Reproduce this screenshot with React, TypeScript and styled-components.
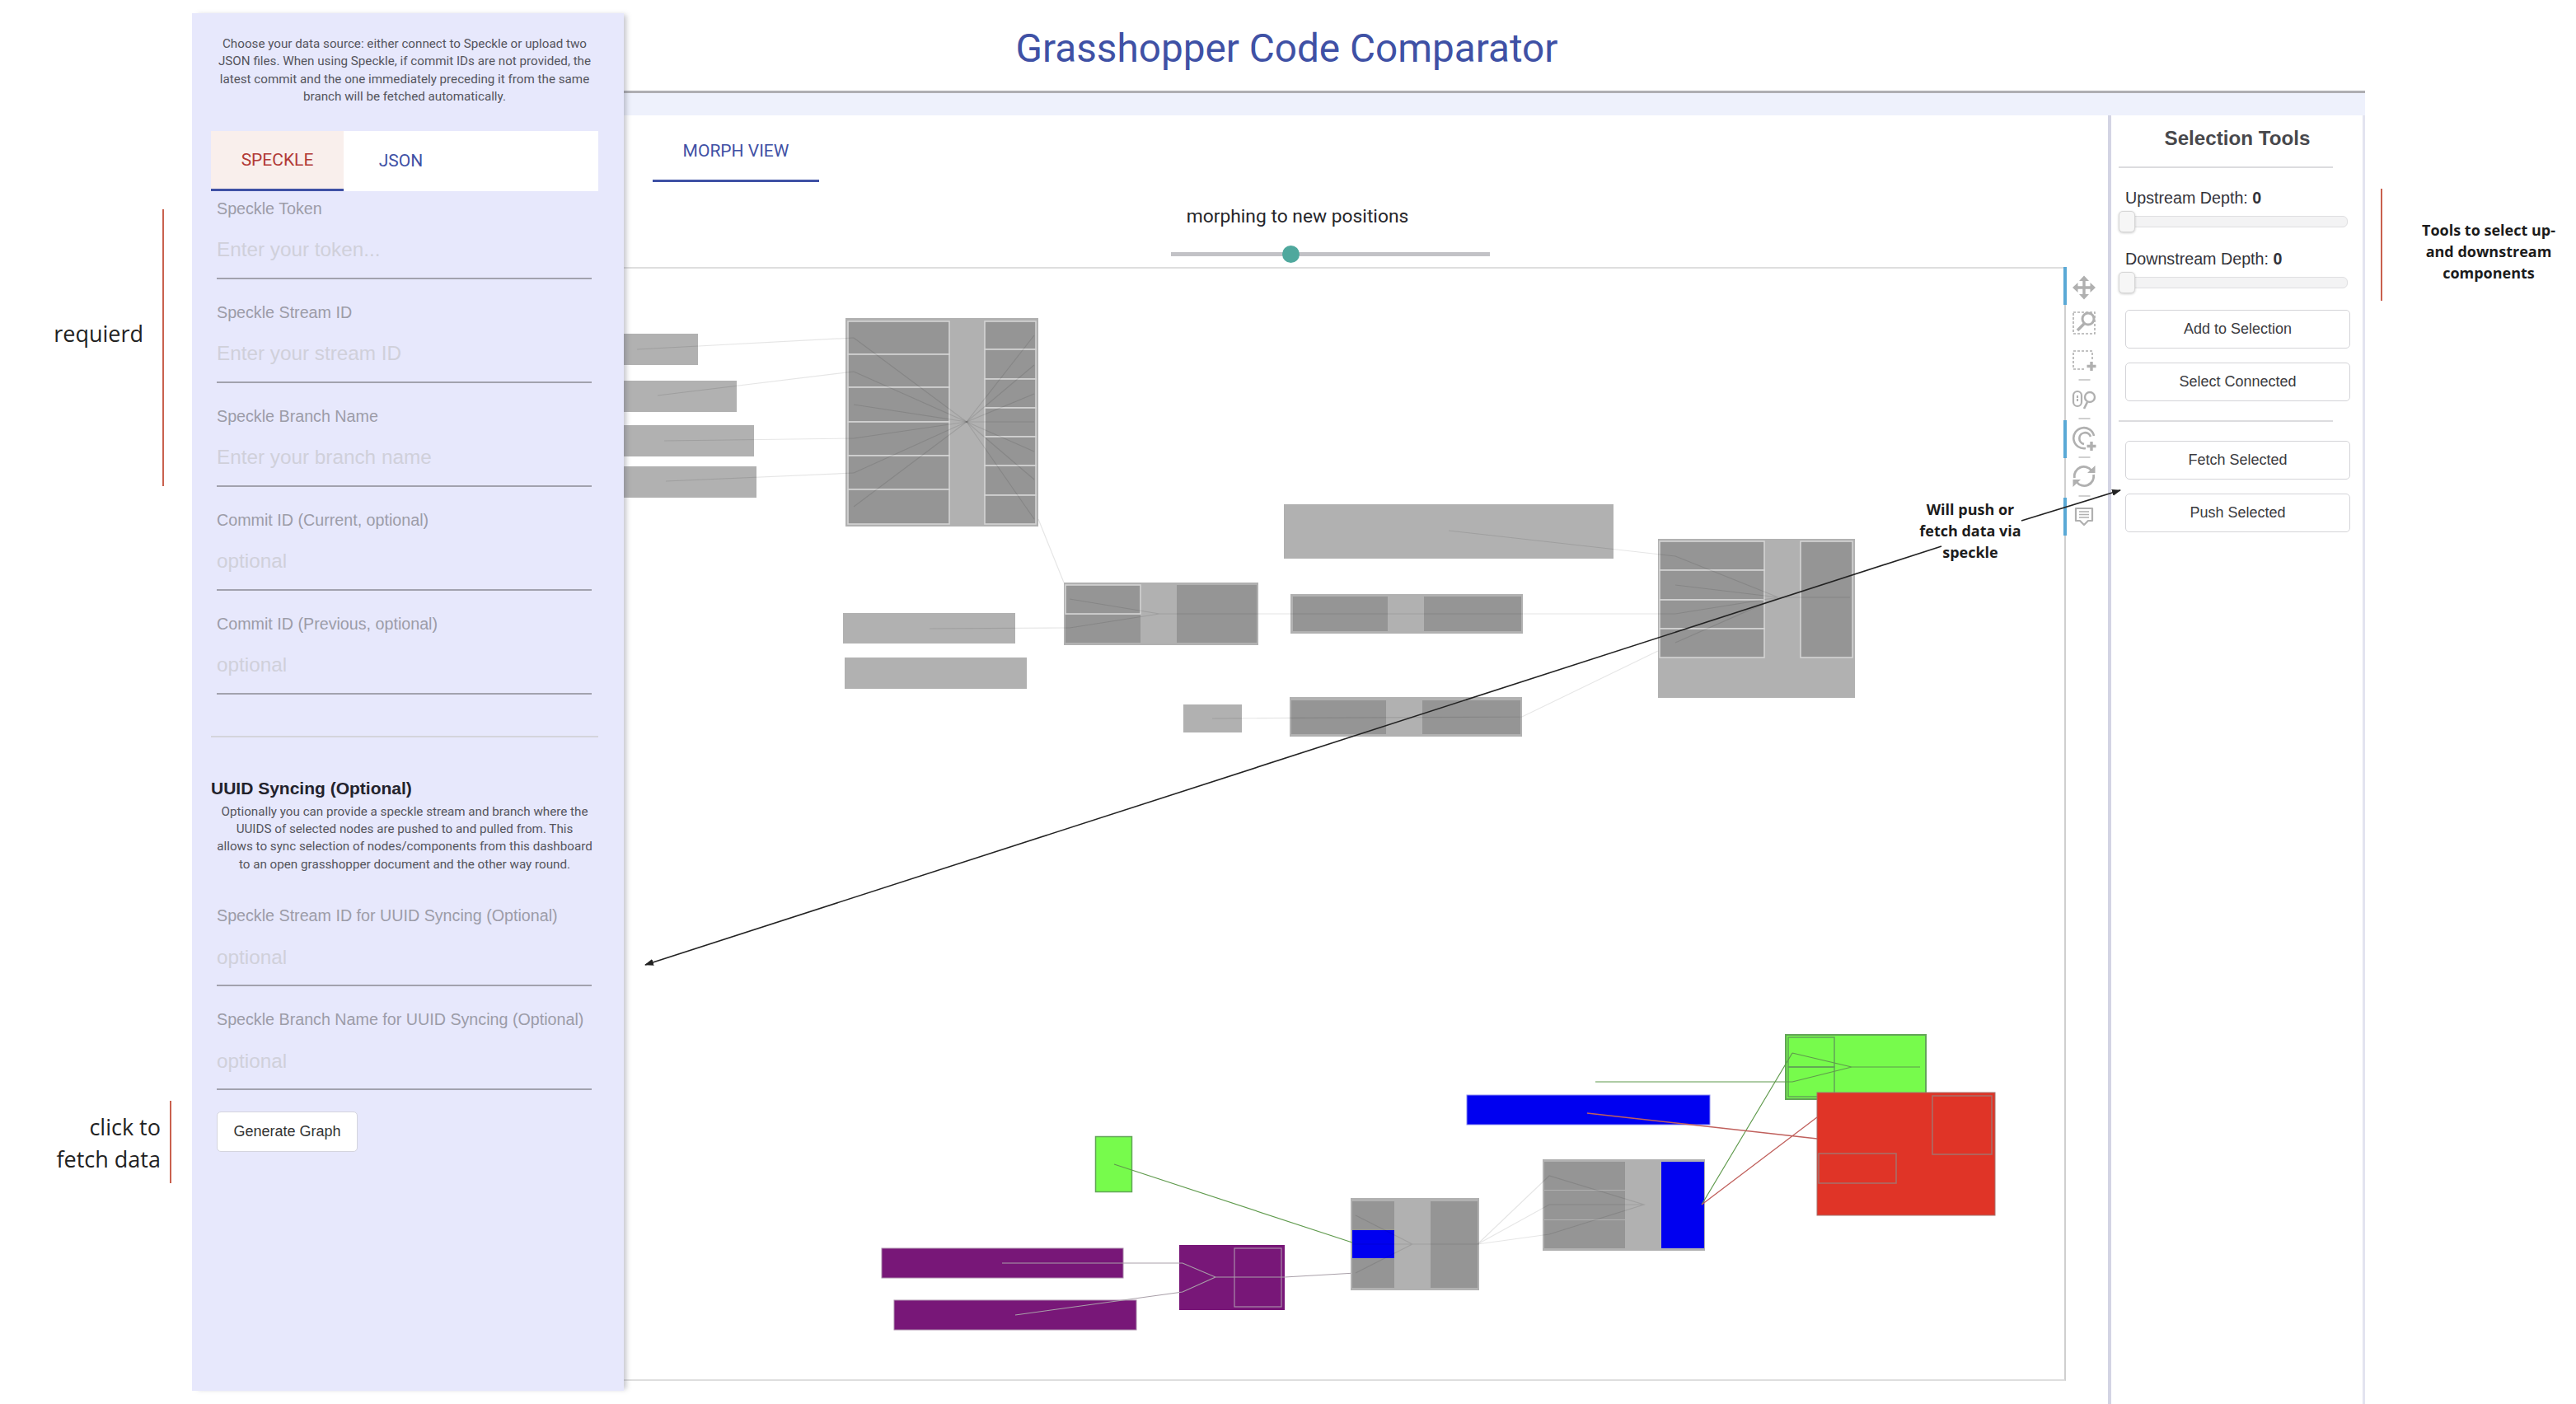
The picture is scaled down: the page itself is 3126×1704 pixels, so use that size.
import styled, { createGlobalStyle } from "styled-components";

const GlobalStyle = createGlobalStyle`
  html, body {
    margin: 0;
    padding: 0;
    background: #fff;
  }
  * {
    box-sizing: border-box;
  }
`;

const sans = `Roboto, "Liberation Sans", sans-serif`;
const helv = `"Liberation Sans", Arial, sans-serif`;
const note = `"Open Sans", "Noto Sans", sans-serif`;

const speckleFields = [
  { label: "Speckle Token", hint: "Enter your token..." },
  { label: "Speckle Stream ID", hint: "Enter your stream ID" },
  { label: "Speckle Branch Name", hint: "Enter your branch name" },
  { label: "Commit ID (Current, optional)", hint: "optional" },
  { label: "Commit ID (Previous, optional)", hint: "optional" },
];

const uuidFields = [
  { label: "Speckle Stream ID for UUID Syncing (Optional)", hint: "optional" },
  { label: "Speckle Branch Name for UUID Syncing (Optional)", hint: "optional" },
];

function GreyGraph() {
  const g = "#b1b1b1";
  const c = "#959595";
  const leftY = [390, 430, 470, 512, 553, 594, 636];
  const rightY = [390, 424, 460, 495, 530, 565, 601, 636];
  return (
    <g>
      <rect x="757" y="405" width="90" height="38" fill={g} />
      <rect x="757" y="462" width="137" height="38" fill={g} />
      <rect x="757" y="516" width="158" height="38" fill={g} />
      <rect x="757" y="566" width="161" height="38" fill={g} />
      <rect x="1558" y="612" width="400" height="66" fill={g} />
      <rect x="1023" y="744" width="209" height="37" fill={g} />
      <rect x="1025" y="798" width="221" height="38" fill={g} />
      <rect x="1436" y="855" width="71" height="34" fill={g} />

      <rect x="1026" y="386" width="234" height="253" fill={g} />
      {leftY.slice(0, -1).map((y, i) => (
        <rect key={y} x="1029" y={y} width="123" height={leftY[i + 1] - y} fill={c} stroke="#d4d4d4" strokeWidth="1.6" />
      ))}
      {rightY.slice(0, -1).map((y, i) => (
        <rect key={y} x="1195" y={y} width="62" height={rightY[i + 1] - y} fill={c} stroke="#d4d4d4" strokeWidth="1.6" />
      ))}

      <rect x="1291" y="707" width="236" height="76" fill={g} />
      <rect x="1293" y="710" width="91" height="35" fill={c} stroke="#d4d4d4" strokeWidth="1.6" />
      <rect x="1293" y="746" width="91" height="34" fill={c} />
      <rect x="1428" y="710" width="97" height="70" fill={c} />

      <rect x="1566" y="721" width="282" height="48" fill={g} />
      <rect x="1569" y="724" width="115" height="42" fill={c} />
      <rect x="1728" y="724" width="118" height="42" fill={c} />

      <rect x="1565" y="846" width="282" height="48" fill={g} />
      <rect x="1567" y="850" width="115" height="41" fill={c} />
      <rect x="1726" y="850" width="119" height="41" fill={c} />

      <rect x="2012" y="654" width="239" height="193" fill={g} />
      {[657, 692, 728, 763].map((y, i) => (
        <rect key={y} x="2014" y={y} width="127" height={[35, 36, 35, 35][i]} fill={c} stroke="#d4d4d4" strokeWidth="1.6" />
      ))}
      <rect x="2185" y="657" width="63" height="141" fill={c} stroke="#d4d4d4" strokeWidth="1.6" />

      <g fill="none" stroke="#000" strokeOpacity="0.1" strokeWidth="1.2">
        {[410, 451, 491, 532, 574, 615].map((y) => (
          <path key={y} d={`M1036 ${y}L1173 512`} />
        ))}
        {[407, 443, 478, 512, 548, 582, 630].map((y) => (
          <path key={y} d={`M1255 ${y}L1173 512`} />
        ))}
        <path d="M773 424L1036 410M798 480L1036 451M806 535L1036 532M808 584L1036 574M1260 630L1291 707" />
        <path d="M1298 727L1407 745M1298 762L1407 745M1128 763L1298 762M1407 745L2033 745" />
        <path d="M1758 644L2033 675M1471 872L1847 870L2012 790" />
        <path d="M2033 675L2158 725M2033 710L2158 725M2033 745L2158 725M2033 780L2158 725M2158 725L2245 725" />
      </g>
    </g>
  );
}

function ColourGraph() {
  const g = "#b1b1b1";
  const c = "#959595";
  const green = "#77fb4c";
  const red = "#e03427";
  const purple = "#781778";
  const blue = "#0000f0";
  return (
    <g>
      <rect x="1329.500" y="1379.500" width="44" height="67" fill={green} stroke="#62a457" strokeWidth="1.5" />
      <rect x="1070" y="1515" width="293" height="36" fill={purple} stroke="#a98aa9" />
      <rect x="1085" y="1578" width="294" height="36" fill={purple} stroke="#a98aa9" />
      <rect x="1431" y="1511" width="128" height="79" fill={purple} />
      <rect x="1498" y="1515" width="57" height="71" fill={purple} stroke="#a98aa9" strokeWidth="1.2" />
      <path d="M1216 1533H1435L1475 1550H1559L1645 1545M1232 1596L1435 1568L1475 1550" fill="none" stroke="#a9a0a9" strokeWidth="1.2" />

      <rect x="1639" y="1454" width="156" height="112" fill={g} />
      <rect x="1641" y="1458" width="51" height="105" fill={c} />
      <rect x="1736" y="1458" width="57" height="105" fill={c} />
      <rect x="1641" y="1493" width="51" height="34" fill={blue} />
      <path d="M1352 1413L1641 1508" stroke="#5f9a4c" strokeWidth="1.2" fill="none" />
      <path d="M1645 1475L1714 1510M1645 1545L1714 1510M1641 1510H1795" stroke="#000" strokeOpacity="0.1" strokeWidth="1.2" fill="none" />

      <rect x="1780" y="1329" width="295" height="36" fill={blue} stroke="#8f8ff0" />
      <rect x="1872" y="1407" width="197" height="111" fill={g} />
      <rect x="1874" y="1410" width="98" height="34" fill={c} />
      <rect x="1874" y="1445" width="98" height="35" fill={c} />
      <rect x="1874" y="1481" width="98" height="34" fill={c} />
      <rect x="2016" y="1410" width="52" height="105" fill={blue} />
      <path d="M1793 1510L1880 1427L1995 1462L1880 1498L1793 1510L1880 1462H1995" stroke="#000" strokeOpacity="0.1" strokeWidth="1.2" fill="none" />

      <rect x="2167" y="1256" width="170" height="78" fill={green} stroke="#62a457" strokeWidth="2" />
      <rect x="2170" y="1259" width="56" height="36" fill="none" stroke="#62a457" strokeWidth="1.5" />
      <rect x="2170" y="1295" width="56" height="36" fill="none" stroke="#62a457" strokeWidth="1.5" />
      <path d="M1936 1313H2175L2247 1295H2330M2175 1278L2247 1295M2065 1462L2175 1278" stroke="#5f9a4c" strokeWidth="1.2" fill="none" />

      <rect x="2205" y="1326" width="216" height="149" fill={red} stroke="#a5716c" />
      <rect x="2345" y="1330" width="72" height="71" fill="none" stroke="#a5716c" strokeWidth="1.5" />
      <rect x="2207" y="1400" width="94" height="36" fill="none" stroke="#a5716c" strokeWidth="1.5" />
      <path d="M1926 1351L2205 1382M2065 1462L2205 1356" stroke="#c0605c" strokeWidth="1.3" fill="none" />
    </g>
  );
}

function ToolIcons() {
  const ic = "#b0b0b0";
  return (
    <svg width="32" height="320" viewBox="0 0 32 320" fill="none" stroke={ic}>
      {/* move */}
      <path d="M16 4v24M5 16h22" strokeWidth="3.4" />
      <path d="M16 1.500l6 6.500H10zM16 30.500l6-6.500H10zM2 16l6.500-6v12zM30 16l-6.500-6v12z" fill={ic} stroke="none" />
      {/* zoom select */}
      <rect x="3" y="46" width="26" height="26" strokeDasharray="3 2" strokeWidth="1.6" />
      <circle cx="21" cy="54" r="7" strokeWidth="3" />
      <path d="M16 60L8 68" strokeWidth="3.6" />
      {/* box select */}
      <path d="M26 103V93H3v22h14" strokeDasharray="3 2" strokeWidth="1.6" />
      <path d="M25 106v11M19.500 111.500h11" strokeWidth="3.4" />
      <path d="M9.500 128h14" strokeWidth="1.2" />
      {/* zoom to data */}
      <rect x="3" y="142" width="10" height="18" rx="5" strokeWidth="2.2" />
      <path d="M8 147v8" strokeWidth="2" strokeDasharray="3 1" />
      <circle cx="23" cy="149" r="6" strokeWidth="2.4" />
      <path d="M20 155L16 163" strokeWidth="2.6" />
      <path d="M9.500 175h14" strokeWidth="1.2" />
      {/* lasso */}
      <path d="M28 196a12.500 12.500 0 1 0-10 15" strokeWidth="2.6" />
      <path d="M24 197a7 7 0 1 0-8 9" strokeWidth="2.6" />
      <path d="M25 203v11M19.500 208.500h11" strokeWidth="3.4" />
      <path d="M9.500 222h14" strokeWidth="1.2" />
      {/* reset */}
      <path d="M4.500 247A11.500 11.500 0 0 1 25 238M27.500 243A11.500 11.500 0 0 1 7 252" strokeWidth="2.8" />
      <path d="M20 241h9.500v-9zM12 249H2.500v9z" fill={ic} stroke="none" />
      <path d="M9.500 269h14" strokeWidth="1.2" />
      {/* data view */}
      <path d="M6 284h20v15h-5l-5 5-5-5H6z" strokeWidth="2.2" strokeLinejoin="round" />
      <path d="M10 288h12M10 291.500h12M10 295h12" strokeWidth="1.5" />
    </svg>
  );
}

export default function App() {
  return (
    <Page>
      <GlobalStyle />
      <Sidebar>
        <Intro>
          Choose your data source: either connect to Speckle or upload two
          <br />
          JSON files. When using Speckle, if commit IDs are not provided, the
          <br />
          latest commit and the one immediately preceding it from the same
          <br />
          branch will be fetched automatically.
        </Intro>
        <Tabs>
          <SourceTab $active>SPECKLE</SourceTab>
          <SourceTab>JSON</SourceTab>
        </Tabs>
        <FieldList>
          {speckleFields.map((f) => (
            <Field key={f.label}>
              <FieldLabel>{f.label}</FieldLabel>
              <FieldInput placeholder={f.hint} readOnly />
            </Field>
          ))}
        </FieldList>
        <SideRule />
        <SideHeading>UUID Syncing (Optional)</SideHeading>
        <SideText>
          Optionally you can provide a speckle stream and branch where the
          <br />
          UUIDS of selected nodes are pushed to and pulled from. This
          <br />
          allows to sync selection of nodes/components from this dashboard
          <br />
          to an open grasshopper document and the other way round.
        </SideText>
        <UuidList>
          {uuidFields.map((f) => (
            <Field key={f.label}>
              <FieldLabel>{f.label}</FieldLabel>
              <FieldInput placeholder={f.hint} readOnly />
            </Field>
          ))}
        </UuidList>
        <GenerateButton>Generate Graph</GenerateButton>
      </Sidebar>

      <Main>
        <Header>
          <Title>Grasshopper Code Comparator</Title>
        </Header>
        <Band />
        <Content>
          <Center>
            <ViewTabs>
              <ViewTab>MORPH VIEW</ViewTab>
            </ViewTabs>
            <MorphBar>
              <MorphLabel>morphing to new positions</MorphLabel>
              <MorphTrack>
                <MorphThumb />
              </MorphTrack>
            </MorphBar>
            <CanvasRow>
              <Canvas />
              <ToolStrip>
                <ToolAccent $top={0} />
                <ToolAccent $top={186} />
                <ToolAccent $top={280} />
                <ToolIcons />
              </ToolStrip>
            </CanvasRow>
          </Center>
          <SelectionPanel>
            <PanelTitle>Selection Tools</PanelTitle>
            <PanelRule />
            <DepthLabel>
              Upstream Depth: <b>0</b>
            </DepthLabel>
            <DepthSlider>
              <DepthThumb />
            </DepthSlider>
            <DepthLabel>
              Downstream Depth: <b>0</b>
            </DepthLabel>
            <DepthSlider>
              <DepthThumb />
            </DepthSlider>
            <ButtonStack>
              <PanelButton>Add to Selection</PanelButton>
              <PanelButton>Select Connected</PanelButton>
            </ButtonStack>
            <PanelRule $gap />
            <ButtonStack>
              <PanelButton>Fetch Selected</PanelButton>
              <PanelButton>Push Selected</PanelButton>
            </ButtonStack>
          </SelectionPanel>
        </Content>
      </Main>

      <GraphLayer viewBox="0 0 3126 1704" width="3126" height="1704">
        <GreyGraph />
        <ColourGraph />
      </GraphLayer>

      <ArrowLayer viewBox="0 0 3126 1704" width="3126" height="1704">
        <defs>
          <marker id="tip" markerWidth="12" markerHeight="10" refX="10" refY="4" orient="auto" markerUnits="userSpaceOnUse">
            <path d="M0 0L11 4L0 8z" fill="#222" />
          </marker>
        </defs>
        <path d="M2356 663L783 1171" stroke="#222" strokeWidth="1.6" markerEnd="url(#tip)" />
        <path d="M2453 632L2573 595" stroke="#222" strokeWidth="1.6" markerEnd="url(#tip)" />
      </ArrowLayer>

      <RedMark $x={197} $y={254} $h={336} />
      <RedMark $x={206} $y={1336} $h={100} />
      <RedMark $x={2889} $y={229} $h={136} />
      <SideNote $top={385} $right={2952}>requierd</SideNote>
      <SideNote $top={1348} $right={2931}>
        click to
        <br />
        fetch data
      </SideNote>
      <BoldNote $x={2900} $y={266} $w={240}>
        Tools to select up-
        <br />
        and downstream
        <br />
        components
      </BoldNote>
      <BoldNote $x={2311} $y={605} $w={160}>
        Will push or
        <br />
        fetch data via
        <br />
        speckle
      </BoldNote>
    </Page>
  );
}

const Page = styled.div`
  position: relative;
  display: flex;
  width: 3126px;
  height: 1704px;
  overflow: hidden;
  background: #fff;
`;

const Sidebar = styled.aside`
  position: relative;
  z-index: 3;
  flex: none;
  width: 524px;
  height: 1672px;
  margin: 16px 0 0 233px;
  padding: 27px 31px 0 23px;
  background: #e7e8fc;
  box-shadow: 5px 0 6px -2px rgba(90, 90, 110, 0.35);
  font-family: ${sans};
`;

const Intro = styled.p`
  margin: 0;
  font-size: 15.2px;
  line-height: 21.4px;
  color: #55555d;
  text-align: center;
  white-space: nowrap;
`;

const Tabs = styled.div`
  display: flex;
  height: 73px;
  margin-top: 30px;
  background: #fff;
`;

const SourceTab = styled.div<{ $active?: boolean }>`
  display: flex;
  align-items: center;
  justify-content: center;
  width: ${(p) => (p.$active ? "161px" : "139px")};
  height: 100%;
  font-size: 21px;
  color: ${(p) => (p.$active ? "#b23a36" : "#3f51a5")};
  background: ${(p) => (p.$active ? "#f9efec" : "transparent")};
  border-bottom: ${(p) => (p.$active ? "3px solid #3f51a5" : "none")};
`;

const FieldList = styled.div`
  display: flex;
  flex-direction: column;
  gap: 28px;
  padding: 9px 8px 0 7px;
`;

const UuidList = styled(FieldList)`
  padding-top: 39px;
`;

const Field = styled.div`
  display: flex;
  flex-direction: column;
`;

const FieldLabel = styled.label`
  height: 24px;
  font-family: ${helv};
  font-size: 19.7px;
  line-height: 24px;
  color: #9c9ca8;
  white-space: nowrap;
`;

const FieldInput = styled.input`
  width: 100%;
  height: 74px;
  padding: 5px 0 0;
  border: none;
  border-bottom: 2px solid #a2a2ae;
  background: transparent;
  font-family: ${helv};
  font-size: 24.3px;
  outline: none;

  &::placeholder {
    color: #d0d0da;
    opacity: 1;
  }
`;

const SideRule = styled.hr`
  margin: 50px 0 0;
  border: none;
  border-top: 2px solid #d4d4dc;
`;

const SideHeading = styled.h3`
  margin: 48px 0 0;
  font-family: ${helv};
  font-size: 21px;
  line-height: 28px;
  font-weight: 700;
  color: #22222c;
`;

const SideText = styled.p`
  margin: 4px 0 0;
  font-size: 15.2px;
  line-height: 21.4px;
  color: #55555d;
  text-align: center;
  white-space: nowrap;
`;

const GenerateButton = styled.button`
  display: block;
  width: 171px;
  height: 49px;
  margin: 26px 0 0 7px;
  background: #fff;
  border: 1.5px solid #d4d4de;
  border-radius: 5px;
  font-family: ${helv};
  font-size: 18px;
  color: #333;
`;

const Main = styled.div`
  display: flex;
  flex-direction: column;
  flex: none;
  width: 2113px;
  height: 1704px;
`;

const Header = styled.header`
  display: flex;
  align-items: center;
  justify-content: center;
  flex: none;
  height: 113px;
  padding: 8px 504px 0 0;
  border-bottom: 3px solid #aeaeb2;
`;

const Title = styled.h1`
  margin: 0;
  font-family: ${sans};
  font-size: 47.7px;
  font-weight: 400;
  color: #3f51a5;
  white-space: nowrap;
`;

const Band = styled.div`
  flex: none;
  height: 27px;
  background: #eef1fc;
`;

const Content = styled.div`
  display: flex;
  flex: 1;
`;

const Center = styled.section`
  display: flex;
  flex-direction: column;
  width: 1801px;
  padding-left: 35px;
`;

const ViewTabs = styled.div`
  display: flex;
  height: 81px;
`;

const ViewTab = styled.div`
  display: flex;
  align-items: center;
  justify-content: center;
  width: 202px;
  height: 81px;
  padding-top: 7px;
  font-family: ${sans};
  font-size: 21px;
  color: #3f51a5;
  border-bottom: 3px solid #3f51a5;
`;

const MorphBar = styled.div`
  display: flex;
  flex-direction: column;
  align-items: center;
  width: 387px;
  margin: 29px 0 0 629px;
  height: 74px;
`;

const MorphLabel = styled.div`
  margin-right: 80px;
  font-family: ${sans};
  font-size: 22.8px;
  line-height: 26px;
  color: #26262a;
  white-space: nowrap;
`;

const MorphTrack = styled.div`
  position: relative;
  width: 387px;
  height: 5px;
  margin-top: 30px;
  background: #c2c2c6;
`;

const MorphThumb = styled.span`
  position: absolute;
  left: 135px;
  top: -8px;
  width: 21px;
  height: 21px;
  border-radius: 50%;
  background: #4fa89d;
`;

const CanvasRow = styled.div`
  display: flex;
  flex: 1;
  margin-left: -35px;
`;

const Canvas = styled.div`
  width: 1750px;
  height: 1352px;
  border-top: 2px solid #dedede;
  border-right: 2px solid #cfcfcf;
  border-bottom: 2px solid #dedede;
`;

const ToolStrip = styled.div`
  position: relative;
  display: flex;
  flex: 1;
  justify-content: center;
  padding: 9px 12px 0 4px;
`;

const ToolAccent = styled.span<{ $top: number }>`
  position: absolute;
  left: -3px;
  top: ${(p) => p.$top}px;
  width: 4px;
  height: 46px;
  background: #5aa9d6;
`;

const SelectionPanel = styled.aside`
  display: flex;
  flex-direction: column;
  width: 312px;
  padding: 10px 18px 0 9px;
  border-left: 4px solid #d3d4e4;
  border-right: 3px solid #e3e4f0;
  font-family: ${helv};
`;

const PanelTitle = styled.h2`
  margin: 0;
  padding-left: 10px;
  font-size: 24.2px;
  line-height: 36px;
  font-weight: 700;
  color: #48484c;
  text-align: center;
`;

const PanelRule = styled.hr<{ $gap?: boolean }>`
  width: 260px;
  margin: ${(p) => (p.$gap ? "23px 0 23px" : "16px 0 24px")};
  border: none;
  border-top: 2px solid #dcdcdf;
`;

const DepthLabel = styled.div`
  height: 24px;
  padding-left: 8px;
  font-size: 19.7px;
  line-height: 24px;
  color: #33333a;
  white-space: nowrap;
`;

const DepthSlider = styled.div`
  position: relative;
  height: 14px;
  margin: 10px 0 26px;
  background: #f3f3f4;
  border: 1px solid #dfdfe1;
  border-radius: 6px;
`;

const DepthThumb = styled.span`
  position: absolute;
  left: -1px;
  top: -7px;
  width: 20px;
  height: 26px;
  background: #f6f6f6;
  border: 1px solid #d6d6d6;
  border-radius: 5px;
  box-shadow: 0 1px 3px rgba(0, 0, 0, 0.2);
`;

const ButtonStack = styled.div`
  display: flex;
  flex-direction: column;
  gap: 17px;
  padding-left: 8px;
`;

const PanelButton = styled.button`
  width: 273px;
  height: 47px;
  background: #fff;
  border: 1.5px solid #d4d4d8;
  border-radius: 5px;
  font-family: ${helv};
  font-size: 18px;
  color: #3b3b40;
`;

const GraphLayer = styled.svg`
  position: absolute;
  left: 0;
  top: 0;
  z-index: 1;
  pointer-events: none;
`;

const ArrowLayer = styled.svg`
  position: absolute;
  left: 0;
  top: 0;
  z-index: 4;
  pointer-events: none;
`;

const RedMark = styled.span<{ $x: number; $y: number; $h: number }>`
  position: absolute;
  left: ${(p) => p.$x}px;
  top: ${(p) => p.$y}px;
  width: 2px;
  height: ${(p) => p.$h}px;
  background: #c9614e;
`;

const SideNote = styled.div<{ $top: number; $right: number }>`
  position: absolute;
  top: ${(p) => p.$top}px;
  right: ${(p) => p.$right}px;
  font-family: ${note};
  font-size: 27px;
  line-height: 39px;
  color: #222;
  text-align: right;
  white-space: nowrap;
`;

const BoldNote = styled.div<{ $x: number; $y: number; $w: number }>`
  position: absolute;
  z-index: 5;
  left: ${(p) => p.$x}px;
  top: ${(p) => p.$y}px;
  width: ${(p) => p.$w}px;
  font-family: ${note};
  font-size: 18px;
  line-height: 26px;
  font-weight: 700;
  color: #1c1c1c;
  text-align: center;
  white-space: nowrap;
`;
